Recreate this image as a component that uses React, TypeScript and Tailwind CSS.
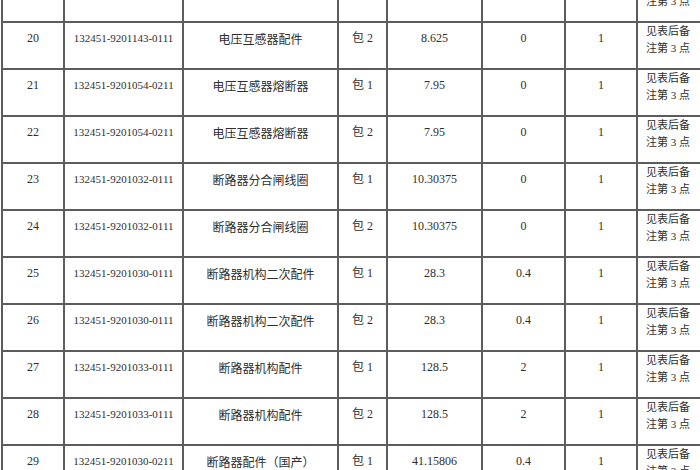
const rows = [
  ["19", "132451-9201143-0111", "电压互感器配件", "包 1", "8.625", "0", "1"],
  ["20", "132451-9201143-0111", "电压互感器配件", "包 2", "8.625", "0", "1"],
  ["21", "132451-9201054-0211", "电压互感器熔断器", "包 1", "7.95", "0", "1"],
  ["22", "132451-9201054-0211", "电压互感器熔断器", "包 2", "7.95", "0", "1"],
  ["23", "132451-9201032-0111", "断路器分合闸线圈", "包 1", "10.30375", "0", "1"],
  ["24", "132451-9201032-0111", "断路器分合闸线圈", "包 2", "10.30375", "0", "1"],
  ["25", "132451-9201030-0111", "断路器机构二次配件", "包 1", "28.3", "0.4", "1"],
  ["26", "132451-9201030-0111", "断路器机构二次配件", "包 2", "28.3", "0.4", "1"],
  ["27", "132451-9201033-0111", "断路器机构配件", "包 1", "128.5", "2", "1"],
  ["28", "132451-9201033-0111", "断路器机构配件", "包 2", "128.5", "2", "1"],
  ["29", "132451-9201030-0211", "断路器配件（国产）", "包 1", "41.15806", "0.4", "1"],
];

const widths = [62, 119, 155, 49, 95, 83, 72, 130];

const cell = "border-2 border-[#5c5c5c] align-top pt-[7px] text-center leading-[17px]";

export default function App() {
  return (
    <div className="w-[700px] h-[470px] overflow-hidden bg-white">
      <table className="table-fixed border-collapse w-[765px] ml-[1px] mt-[-26px] text-[#2e2e2e] font-['Liberation_Serif','Noto_Sans_CJK_SC',serif]">
        <colgroup>
          {widths.map((w, i) => (
            <col key={i} style={{ width: w }} />
          ))}
        </colgroup>
        <tbody>
          {rows.map((r) => (
            <tr key={r[0]} className="h-[47px]">
              <td className={`${cell} text-[12px]`}>{r[0]}</td>
              <td className={`${cell} text-[11px]`}>{r[1]}</td>
              <td className={`${cell} text-[12px] font-['Noto_Sans_CJK_SC',sans-serif]`}>{r[2]}</td>
              <td className={`${cell} text-[12px]`}>{r[3]}</td>
              <td className={`${cell} text-[12px]`}>{r[4]}</td>
              <td className={`${cell} text-[12px]`}>{r[5]}</td>
              <td className={`${cell} text-[12px]`}>{r[6]}</td>
              <td className="border-2 border-[#5c5c5c] align-top pt-0 pl-[8px] text-left text-[11px] leading-[17px] whitespace-nowrap">
                <div>见表后备</div>
                <div>注第 3 点</div>
              </td>
            </tr>
          ))}
        </tbody>
      </table>
    </div>
  );
}
